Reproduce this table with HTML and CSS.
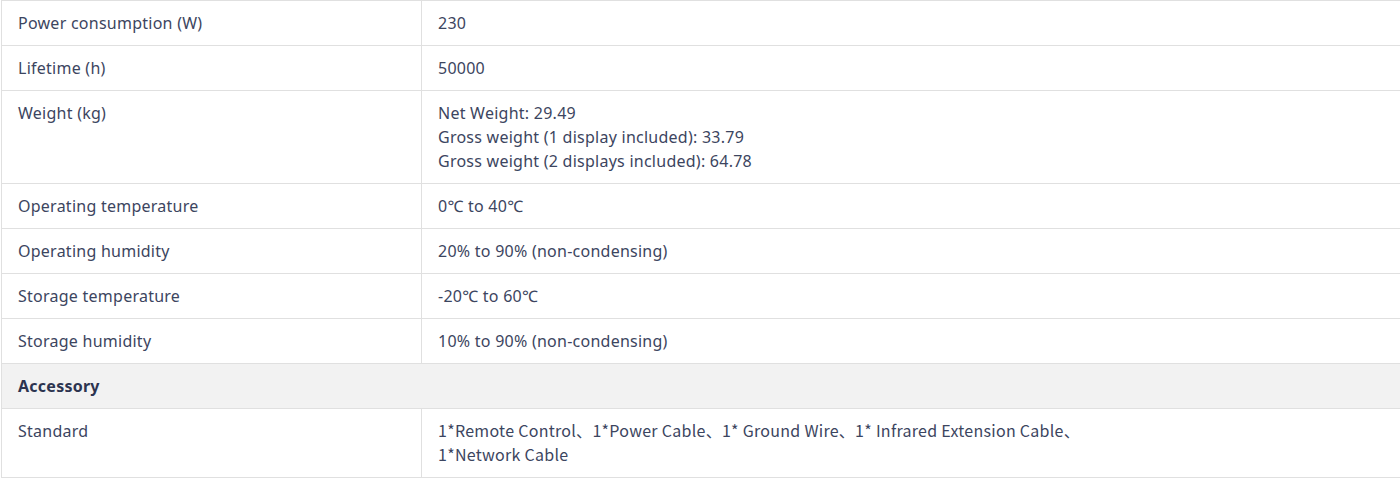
FILE: index.html
```html
<!DOCTYPE html>
<html lang="en">
<head>
<meta charset="utf-8">
<title>Specifications</title>
<link rel="stylesheet" href="styles.css">
</head>
<body>
<div class="wrap">
<table class="spec">
  <colgroup><col class="c1"><col class="c2"></colgroup>
  <tbody>
    <tr><td>Power consumption (W)</td><td>230</td></tr>
    <tr><td>Lifetime (h)</td><td>50000</td></tr>
    <tr><td>Weight (kg)</td><td>Net Weight: 29.49<br>Gross weight (1 display included): 33.79<br>Gross weight (2 displays included): 64.78</td></tr>
    <tr><td>Operating temperature</td><td>0℃ to 40℃</td></tr>
    <tr><td>Operating humidity</td><td>20% to 90% (non-condensing)</td></tr>
    <tr><td>Storage temperature</td><td>-20℃ to 60℃</td></tr>
    <tr><td>Storage humidity</td><td>10% to 90% (non-condensing)</td></tr>
    <tr class="group"><td colspan="2">Accessory</td></tr>
    <tr><td>Standard</td><td class="cjk">1*Remote Control、1*Power Cable、1* Ground Wire、1* Infrared Extension Cable、<br>1*Network Cable</td></tr>
  </tbody>
</table>
</div>
</body>
</html>
```
FILE: styles.css
```css
html, body {
  margin: 0;
  padding: 0;
  background: #fff;
  overflow: hidden;
}
.wrap {
  padding-left: 1px;
}
.spec {
  border-collapse: collapse;
  width: 1440px;
  table-layout: fixed;
  font-family: "Noto Sans", "Open Sans", sans-serif;
  font-size: 16px;
  line-height: 24px;
  letter-spacing: 0.25px;
  color: #3c4560;
}
.c1 { width: 420px; }
.spec td {
  border: 1px solid #e0e0e0;
  padding: 10px 16px;
  vertical-align: top;
}
.spec .group td {
  background: #f2f2f2;
  font-weight: 700;
  color: #2c3450;
}
.spec .cjk {
  font-family: "Noto Sans CJK SC", sans-serif;
  letter-spacing: 0.28px;
  padding-top: 9px;
  padding-bottom: 11px;
}
```
